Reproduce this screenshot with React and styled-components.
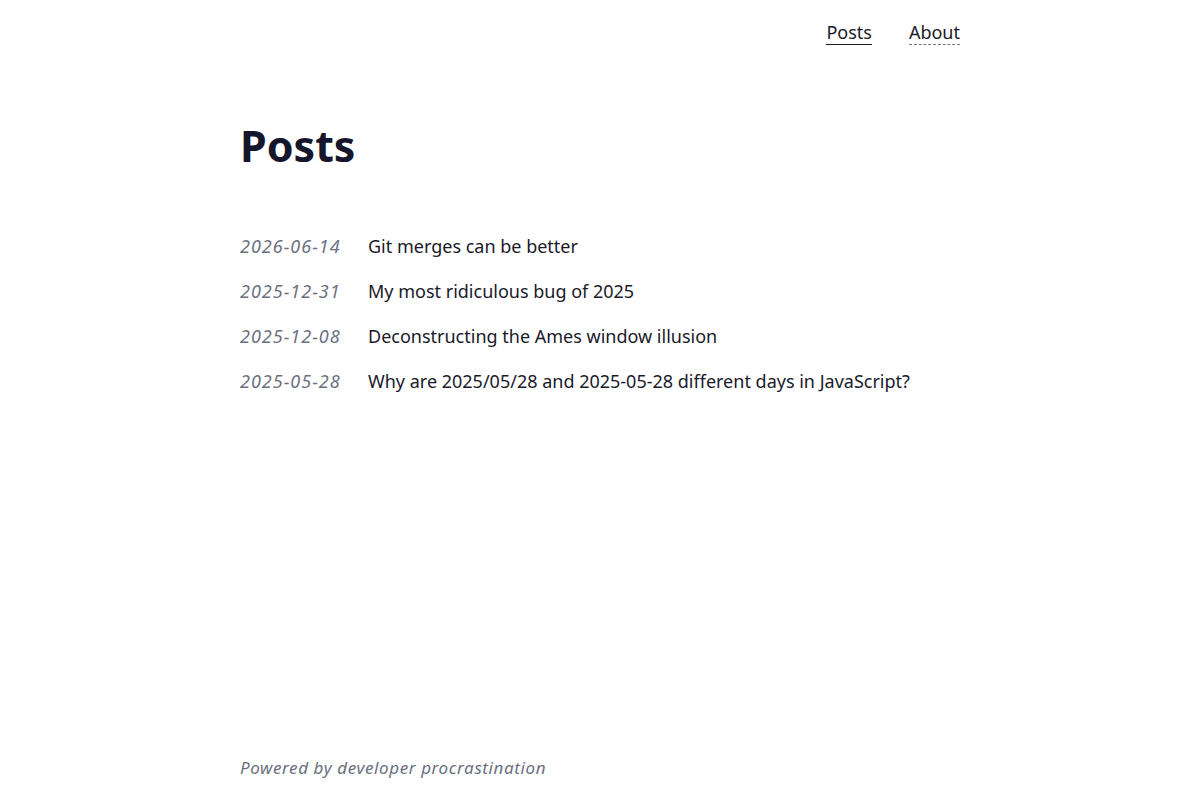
import React from "react";
import styled, { createGlobalStyle } from "styled-components";

const GlobalStyle = createGlobalStyle`
  html, body {
    margin: 0;
    padding: 0;
    background: #fff;
  }
  body {
    font-family: "Noto Sans", "Liberation Sans", sans-serif;
    color: #1a1a2a;
  }
`;

const Page = styled.div`
  width: 720px;
  margin: 0 auto;
  min-height: 800px;
  display: flex;
  flex-direction: column;
`;

const Header = styled.header`
  display: flex;
  justify-content: flex-end;
  gap: 37px;
  padding-top: 20px;
  height: 44px;
`;

const NavLink = styled.a`
  font-size: 18px;
  line-height: 24px;
  color: #1a1a2a;
  text-decoration: none;
  border-bottom: 1px ${(p) => (p.$active ? "solid #1a1a2a" : "dashed #777")};
  height: 24px;
  cursor: pointer;
`;

const Main = styled.main`
  flex: 1;
`;

const Title = styled.h1`
  margin: 54px 0 60px;
  font-size: 43px;
  line-height: 56px;
  font-weight: 700;
  color: #15152b;
`;

const List = styled.ul`
  list-style: none;
  margin: 0;
  padding: 0;
  display: flex;
  flex-direction: column;
  gap: 21px;
`;

const Row = styled.li`
  display: flex;
  font-size: 18px;
  line-height: 24px;
`;

const Date = styled.time`
  width: 128px;
  flex-shrink: 0;
  font-style: italic;
  letter-spacing: 1px;
  color: #6b7080;
`;

const PostLink = styled.a`
  color: #1a1a2a;
  text-decoration: none;
`;

const Footer = styled.footer`
  padding-bottom: 20px;
  font-size: 17px;
  line-height: 24px;
  font-style: italic;
  letter-spacing: 0.6px;
  color: #6b7080;
`;

const posts = [
  { date: "2026-06-14", title: "Git merges can be better" },
  { date: "2025-12-31", title: "My most ridiculous bug of 2025" },
  { date: "2025-12-08", title: "Deconstructing the Ames window illusion" },
  {
    date: "2025-05-28",
    title: "Why are 2025/05/28 and 2025-05-28 different days in JavaScript?",
  },
];

export default function App() {
  return (
    <>
      <GlobalStyle />
      <Page>
        <Header>
          <NavLink $active>Posts</NavLink>
          <NavLink>About</NavLink>
        </Header>
        <Main>
          <Title>Posts</Title>
          <List>
            {posts.map((p) => (
              <Row key={p.date}>
                <Date>{p.date}</Date>
                <PostLink>{p.title}</PostLink>
              </Row>
            ))}
          </List>
        </Main>
        <Footer>Powered by developer procrastination</Footer>
      </Page>
    </>
  );
}
